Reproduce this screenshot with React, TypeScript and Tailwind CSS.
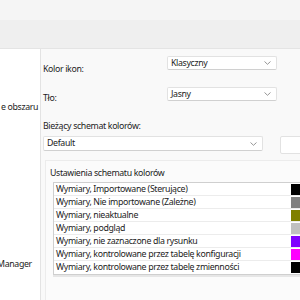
import React from 'react';

const rows = [
  { label: 'Wymiary, Importowane (Sterujące)', color: '#000000' },
  { label: 'Wymiary, Nie importowane (Zależne)', color: '#808080' },
  { label: 'Wymiary, nieaktualne', color: '#808000' },
  { label: 'Wymiary, podgląd', color: '#c0c0c0' },
  { label: 'Wymiary, nie zaznaczone dla rysunku', color: '#8000ff' },
  { label: 'Wymiary, kontrolowane przez tabelę konfiguracji', color: '#ff00ff' },
  { label: 'Wymiary, kontrolowane przez tabelę zmienności', color: '#000000' },
];

const Chevron = () => (
  <svg width="7" height="4" viewBox="0 0 7 4" className="shrink-0">
    <path d="M0.5 0.5 L3.5 3.3 L6.5 0.5" fill="none" stroke="#8a8a8a" strokeWidth="0.9" />
  </svg>
);

const Combo = ({ value, className }: { value: string; className: string }) => (
  <div
    className={`shrink-0 flex items-center justify-between bg-white border border-[#e2e2e2] border-b-[#d0d0d0] rounded-[2px] pl-[3px] pr-[5px] ${className}`}
  >
    <span className="leading-none">{value}</span>
    <Chevron />
  </div>
);

export default function App() {
  return (
    <div
      className="w-[300px] h-[300px] overflow-hidden flex flex-col text-[8.8px] tracking-[-0.35px] text-[#1c1c1c]"
      style={{ fontFamily: '"Noto Sans", "Open Sans", sans-serif' }}
    >
      {/* Top ribbon */}
      <div className="h-[20px] bg-[#f5f5f5]" />
      <div className="h-[29px] bg-[#efefef] border-b border-[#e4e4e4]" />

      <div className="flex flex-1 min-h-0">
        {/* Left tree */}
        <div className="w-[41px] shrink-0 bg-white border-r border-[#e3e3e3] flex flex-col overflow-hidden">
          <div className="mt-[52px] ml-[1px] whitespace-nowrap leading-[12px]">e obszaru</div>
          <div className="mt-[145px] -ml-[3px] whitespace-nowrap leading-[12px]">Manager</div>
        </div>

        {/* Settings panel */}
        <div className="flex-1 min-w-0 bg-[#f9f9f9] pl-[2px] pt-[7px] flex flex-col overflow-hidden">
          <div className="flex h-[31px]">
            <div className="w-[124px] shrink-0 mt-[7px] leading-[12px]">Kolor ikon:</div>
            <Combo value="Klasyczny" className="w-[110px] h-[14px]" />
          </div>
          <div className="flex h-[31px]">
            <div className="w-[124px] shrink-0 mt-[5px] leading-[12px]">Tło:</div>
            <Combo value="Jasny" className="w-[110px] h-[14px]" />
          </div>
          <div className="leading-[12px] mt-[2px]">Bieżący schemat kolorów:</div>
          <div className="flex mt-[4px] items-start">
            <Combo value="Default" className="w-[220px] h-[15px]" />
            <div className="shrink-0 ml-[17px] w-[40px] h-[18px] bg-white border border-[#e2e2e2] rounded-[2px]" />
          </div>

          {/* Group box */}
          <div className="mt-[6px] ml-[2px] flex-1 bg-[#fbfbfb] border-t border-l border-[#ececec] pl-[4px] pt-[6px]">
            <div className="leading-[12px]">Ustawienia schematu kolorów</div>
            <div className="mt-[3px] ml-[3px] bg-white border border-[#cfcfcf] shadow-[0_2px_0_#e6e6e6] w-[260px]">
              {rows.map((r, i) => (
                <div
                  key={i}
                  className={`flex items-center h-[13px] ${i < rows.length - 1 ? 'border-b border-[#ececec]' : ''}`}
                >
                  <span className="pl-[2px] w-[237px] shrink-0 whitespace-nowrap leading-none">{r.label}</span>
                  <span className="shrink-0 h-[11px] w-[20px]" style={{ backgroundColor: r.color }} />
                </div>
              ))}
            </div>
          </div>
        </div>
      </div>
    </div>
  );
}
